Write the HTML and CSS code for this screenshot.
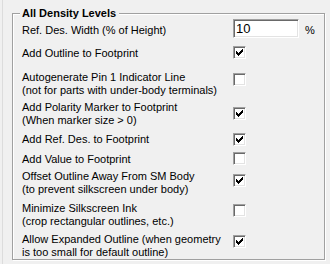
FILE: index.html
```html
<!DOCTYPE html>
<html lang="en">
<head>
    <meta charset="UTF-8">
    <title>Footprint Options</title>
    <link rel="stylesheet" href="styles.css">
</head>
<body>
    <div class="panel">
        <fieldset class="group">
            <legend>All Density Levels</legend>

            <div class="row">
                <span class="label down5">Ref. Des. Width (% of Height)</span>
                <span class="textbox">10</span>
                <span class="unit">%</span>
            </div>

            <div class="row mt8">
                <span class="label down1">Add Outline to Footprint</span>
                <span class="check checked"><svg width="7" height="7" viewBox="0 0 7 7"><path d="M0 2h1v3h-1zM1 3h1v3h-1zM2 4h1v3h-1zM3 3h1v3h-1zM4 2h1v3h-1zM5 1h1v3h-1zM6 0h1v3h-1z"/></svg></span>
            </div>

            <div class="row mt11">
                <span class="label">Autogenerate Pin 1 Indicator Line<br>(not for parts with under-body terminals)</span>
                <span class="check down2"></span>
            </div>

            <div class="row mt4">
                <span class="label">Add Polarity Marker to Footprint<br>(When marker size &gt; 0)</span>
                <span class="check checked down6"><svg width="7" height="7" viewBox="0 0 7 7"><path d="M0 2h1v3h-1zM1 3h1v3h-1zM2 4h1v3h-1zM3 3h1v3h-1zM4 2h1v3h-1zM5 1h1v3h-1zM6 0h1v3h-1z"/></svg></span>
            </div>

            <div class="row mt6">
                <span class="label">Add Ref. Des. to Footprint</span>
                <span class="check checked"><svg width="7" height="7" viewBox="0 0 7 7"><path d="M0 2h1v3h-1zM1 3h1v3h-1zM2 4h1v3h-1zM3 3h1v3h-1zM4 2h1v3h-1zM5 1h1v3h-1zM6 0h1v3h-1z"/></svg></span>
            </div>

            <div class="row mt6">
                <span class="label down1">Add Value to Footprint</span>
                <span class="check"></span>
            </div>

            <div class="row mt4">
                <span class="label">Offset Outline Away From SM Body<br>(to prevent silkscreen under body)</span>
                <span class="check checked down4"><svg width="7" height="7" viewBox="0 0 7 7"><path d="M0 2h1v3h-1zM1 3h1v3h-1zM2 4h1v3h-1zM3 3h1v3h-1zM4 2h1v3h-1zM5 1h1v3h-1zM6 0h1v3h-1z"/></svg></span>
            </div>

            <div class="row mt6">
                <span class="label">Minimize Silkscreen Ink<br>(crop rectangular outlines, etc.)</span>
                <span class="check down2"></span>
            </div>

            <div class="row mt5">
                <span class="label">Allow Expanded Outline (when geometry<br>is too small for default outline)</span>
                <span class="check checked down2"><svg width="7" height="7" viewBox="0 0 7 7"><path d="M0 2h1v3h-1zM1 3h1v3h-1zM2 4h1v3h-1zM3 3h1v3h-1zM4 2h1v3h-1zM5 1h1v3h-1zM6 0h1v3h-1z"/></svg></span>
            </div>
        </fieldset>
    </div>
</body>
</html>
```

FILE: styles.css
```css
body {
    margin: 0;
    background-color: #f0f0f0;
    font-family: "Liberation Sans", Arial, sans-serif;
    font-size: 11px;
    line-height: 13px;
    color: #000;
}
.panel {
    height: 264px;
    box-sizing: border-box;
    margin-left: 2px;
    padding: 8px 0 0 9px;
    border-left: 1px solid #dcdcdc;
}
.group {
    margin: 0;
    padding: 0 0 0 9px;
    width: 313px;
    height: 252px;
    box-sizing: border-box;
    min-width: 0;
    border: 1px solid #a0a0a0;
    box-shadow: inset 1px 1px #fff, 1px 1px #fff;
}
.group legend {
    margin-left: -2px;
    padding: 0 3px 0 2px;
    font-weight: bold;
    line-height: 11px;
    background-color: #f0f0f0;
}
.row {
    display: flex;
    align-items: flex-start;
}
.label {
    width: 211px;
    flex-shrink: 0;
    white-space: nowrap;
}
.textbox {
    width: 66px;
    height: 19px;
    box-sizing: border-box;
    padding-left: 2px;
    font-size: 13px;
    line-height: 17px;
    background-color: #fff;
    border: 1px solid;
    border-color: #a0a0a0 #fff #fff #a0a0a0;
    box-shadow: inset 1px 1px #696969, inset -1px -1px #e3e3e3;
}
.unit {
    margin: 5px 0 0 6px;
}
.check {
    display: flex;
    width: 13px;
    height: 13px;
    box-sizing: border-box;
    padding: 2px 0 0 2px;
    background-color: #fff;
    border: 1px solid;
    border-color: #a0a0a0 #fff #fff #a0a0a0;
    box-shadow: inset 1px 1px #696969, inset -1px -1px #e3e3e3;
}
.check svg {
    display: block;
    fill: #000;
    shape-rendering: crispEdges;
}
.mt4 { margin-top: 4px; }
.mt5 { margin-top: 5px; }
.mt6 { margin-top: 6px; }
.mt8 { margin-top: 8px; }
.mt11 { margin-top: 11px; }
.down1 { margin-top: 1px; }
.down2 { margin-top: 2px; }
.down4 { margin-top: 4px; }
.down5 { margin-top: 5px; }
.down6 { margin-top: 6px; }
```
